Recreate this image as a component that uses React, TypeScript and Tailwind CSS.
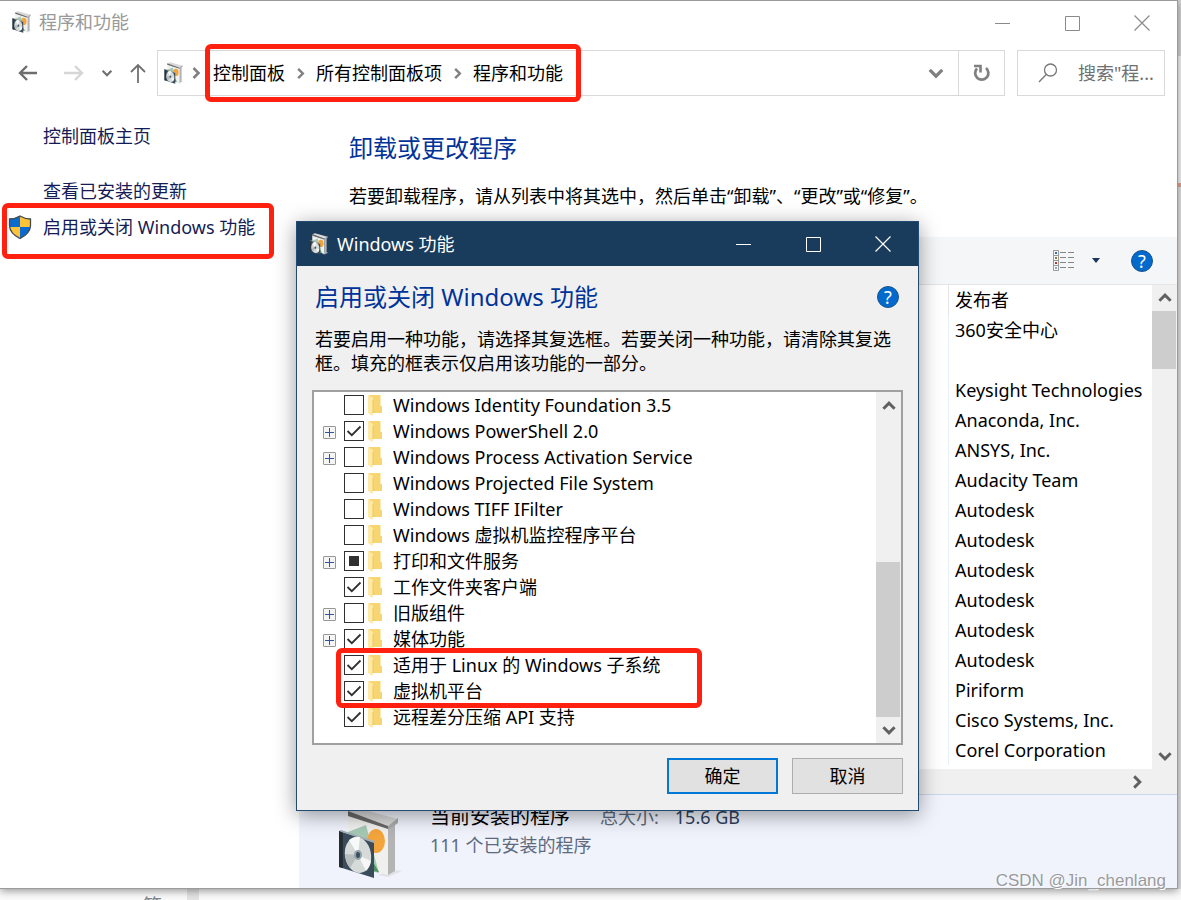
import React, { useState } from 'react';

type CheckState = 'off' | 'on' | 'partial';

interface Feature {
  name: string;
  state: CheckState;
  expandable?: boolean;
}

const initialFeatures: Feature[] = [
  { name: 'Windows Identity Foundation 3.5', state: 'off' },
  { name: 'Windows PowerShell 2.0', state: 'on', expandable: true },
  { name: 'Windows Process Activation Service', state: 'off', expandable: true },
  { name: 'Windows Projected File System', state: 'off' },
  { name: 'Windows TIFF IFilter', state: 'off' },
  { name: 'Windows 虚拟机监控程序平台', state: 'off' },
  { name: '打印和文件服务', state: 'partial', expandable: true },
  { name: '工作文件夹客户端', state: 'on' },
  { name: '旧版组件', state: 'off', expandable: true },
  { name: '媒体功能', state: 'on', expandable: true },
  { name: '适用于 Linux 的 Windows 子系统', state: 'on' },
  { name: '虚拟机平台', state: 'on' },
  { name: '远程差分压缩 API 支持', state: 'on' },
];

const publishers = [
  '360安全中心',
  '',
  'Keysight Technologies',
  'Anaconda, Inc.',
  'ANSYS, Inc.',
  'Audacity Team',
  'Autodesk',
  'Autodesk',
  'Autodesk',
  'Autodesk',
  'Autodesk',
  'Autodesk',
  'Piriform',
  'Cisco Systems, Inc.',
  'Corel Corporation',
];

const breadcrumbs = ['控制面板', '所有控制面板项', '程序和功能'];

// Software box with a CD case in front of it
const ProgramsIcon: React.FC<{ className: string }> = ({ className }) => (
  <svg className={className} viewBox="0 0 64 72" aria-hidden="true">
    <path d="M40 68 L54 63 L64 64 L50 70Z" fill="#d9dbe0" opacity="0.7" />
    <path d="M10 6 L50 20 V68 L10 56Z" fill="#f0f0ee" />
    <path d="M50 20 L57 17 V64 L50 68Z" fill="#b4b4b4" />
    <path d="M10 25 L28 18 L41 66 L10 58Z" fill="#a5c9b4" />
    <path d="M32 50 L41 65 L35 64Z" fill="#4e9464" />
    <ellipse cx="38" cy="34" rx="9" ry="12" fill="#f3a43c" />
    <path d="M10 4 L19 1 L60 12 L50 19Z" fill="#d8d8d8" />
    <path d="M10 4 L50 19 V22 L10 9Z" fill="#686868" />
    <path d="M50 19 L60 11 V16 L50 23Z" fill="#a9a9a9" />
    <path d="M1 24 L36 35 V71 L1 60Z" fill="#3a4b5a" />
    <path d="M1 24 L3 23 L37 34 L36 36Z" fill="#a4adb5" />
    <path d="M1 24 L5 26 V61 L1 60Z" fill="#242c34" />
    <ellipse cx="20" cy="48" rx="13" ry="18" fill="#d6dad9" transform="rotate(-10 20 48)" />
    <path d="M20 48 L11 33 Q16 29 22 30Z" fill="#f8faf9" />
    <path d="M20 48 L28 64 Q32 60 33 54Z" fill="#f6f6f6" />
    <path d="M20 48 L7 47 Q8 56 12 61Z" fill="#b6bdbd" />
    <ellipse cx="20" cy="48" rx="4" ry="5" fill="#93a1ab" />
    <ellipse cx="20" cy="48" rx="2" ry="3" fill="#3d4f5e" />
  </svg>
);

const ShieldIcon: React.FC = () => (
  <svg className="h-6 w-6 shrink-0" viewBox="0 0 24 24" aria-hidden="true">
    <path d="M12 1 Q7 4 1.5 4 V11 Q2 18.500 12 23.500Z" fill="#0a6ad0" />
    <path d="M12 1 Q17 4 22.500 4 V11 Q22 18.500 12 23.500Z" fill="#ffc338" />
    <path d="M1.500 12 H12 V23.500 Q2.500 19 1.500 12Z" fill="#ffc338" />
    <path d="M22.500 12 H12 V23.500 Q21.500 19 22.500 12Z" fill="#0a6ad0" />
    <path d="M12 1 Q17 4 22.500 4 V11 Q22 18.500 12 23.500 Q2 18.500 1.500 11 V4 Q7 4 12 1Z" fill="none" stroke="#444b50" strokeWidth="1.300" />
  </svg>
);

const FolderIcon: React.FC = () => (
  <svg className="ml-1 h-[21px] w-[14px] shrink-0" viewBox="0 0 14 21" aria-hidden="true">
    <path d="M1 0 H12.500 V11 H14 V18 H1Z" fill="#f7d672" />
    <path d="M0 0 L5 3 V19 L4 21 L0 18Z" fill="#ffe9a6" />
    <path d="M5 5 V18" stroke="#ecc660" strokeWidth="1" />
  </svg>
);

const Chevron: React.FC<{ dir: 'up' | 'down' | 'right'; color?: string; className?: string }> = ({ dir, color = '#606060', className = 'h-4 w-4' }) => {
  const paths = { up: 'M3 10.500 L8 5.500 L13 10.500', down: 'M3 5.500 L8 10.500 L13 5.500', right: 'M5.500 3 L10.500 8 L5.500 13' };
  return (
    <svg className={className} viewBox="0 0 16 16" fill="none" stroke={color} strokeWidth="2.600" aria-hidden="true">
      <path d={paths[dir]} />
    </svg>
  );
};

const HelpButton: React.FC = () => (
  <button aria-label="帮助" className="flex h-[22px] w-[22px] shrink-0 items-center justify-center rounded-full border border-[#17548c] bg-[#0369cc] text-lg leading-none text-white">
    ?
  </button>
);

const WindowButtons: React.FC<{ color: string }> = ({ color }) => (
  <div className="flex" style={{ color }}>
    <button aria-label="最小化" className="flex h-11 w-[70px] items-center justify-center">
      <svg width="15" height="15" viewBox="0 0 15 15" stroke="currentColor"><path d="M0 7.500H15" /></svg>
    </button>
    <button aria-label="最大化" className="flex h-11 w-[70px] items-center justify-center">
      <svg width="15" height="15" viewBox="0 0 15 15" stroke="currentColor" fill="none"><path d="M.5 .5H14.500V14.500H.5Z" /></svg>
    </button>
    <button aria-label="关闭" className="flex h-11 w-[70px] items-center justify-center">
      <svg width="16" height="16" viewBox="0 0 16 16" stroke="currentColor" strokeWidth="1.200"><path d="M.5 .5L15.500 15.500M15.500 .5L.5 15.500" /></svg>
    </button>
  </div>
);

const AddressRow: React.FC = () => (
  <div className="flex h-[46px] items-stretch pr-3">
    <div className="flex w-[157px] shrink-0 items-center pl-[18px]">
      <button aria-label="后退">
        <svg width="20" height="18" viewBox="0 0 20 18" fill="none" stroke="#6e6e6e" strokeWidth="2.400"><path d="M19 9H2M9 2L2 9L9 16" /></svg>
      </button>
      <button aria-label="前进" className="ml-[26px]">
        <svg width="20" height="18" viewBox="0 0 20 18" fill="none" stroke="#d6d6d6" strokeWidth="2.400"><path d="M0 9H18M11 2L18 9L11 16" /></svg>
      </button>
      <button aria-label="最近的位置" className="ml-4">
        <Chevron dir="down" color="#707070" className="h-[14px] w-[14px]" />
      </button>
      <button aria-label="上移" className="ml-4">
        <svg width="16" height="20" viewBox="0 0 16 20" fill="none" stroke="#707070" strokeWidth="1.800"><path d="M8 20V2M1 9L8 2L15 9" /></svg>
      </button>
    </div>
    <div className="flex min-w-0 flex-1 items-center border border-[#d9d9d9] pl-1.5">
      <ProgramsIcon className="h-[22px] w-[20px] shrink-0" />
      <Chevron dir="right" color="#808080" className="ml-1 mr-px h-4 w-4 shrink-0" />
      <nav className="relative flex items-center px-2 text-black">
        {breadcrumbs.map((crumb, i) => (
          <React.Fragment key={crumb}>
            {i > 0 && <Chevron dir="right" color="#808080" className="mx-2 h-[15px] w-[15px] shrink-0" />}
            <button className="whitespace-nowrap">{crumb}</button>
          </React.Fragment>
        ))}
        <span className="pointer-events-none absolute -inset-y-[15px] -right-[10px] left-0 rounded-md border-[5px] border-[#ff2010]" />
      </nav>
      <button aria-label="以前的位置" className="ml-auto mr-3"><Chevron dir="down" color="#808080" className="h-5 w-5" /></button>
      <button aria-label="刷新" className="flex w-[46px] items-center justify-center self-stretch border-l border-[#d9d9d9]">
        <svg width="20" height="20" viewBox="0 0 20 20" fill="none" aria-hidden="true">
          <path d="M5 5.500A6.600 6.600 0 1 0 14 5" stroke="#808080" strokeWidth="2.800" />
          <path d="M2 3H8.500V9.500" stroke="#808080" strokeWidth="2.600" />
        </svg>
      </button>
    </div>
    <label className="ml-3 flex w-[148px] shrink-0 items-center border border-[#d9d9d9]">
      <svg className="ml-5 shrink-0" width="20" height="20" viewBox="0 0 20 20" fill="none" stroke="#777" strokeWidth="1.300" aria-hidden="true">
        <circle cx="12.500" cy="7" r="6" />
        <path d="M8.200 11.500L1 19" />
      </svg>
      <input aria-label="搜索" placeholder={'搜索"程...'} className="ml-5 w-full min-w-0 outline-none placeholder:text-[#707070]" />
    </label>
  </div>
);

const Sidebar: React.FC = () => (
  <aside className="flex w-[299px] shrink-0 flex-col pl-[43px] pt-[26px] text-[#151c55]">
    <a href="#home" className="leading-7">控制面板主页</a>
    <a href="#updates" className="mt-[27px] leading-7">查看已安装的更新</a>
    <div className="relative mt-2 -ml-[35px] mr-[25px] flex items-center gap-[11px]">
      <ShieldIcon />
      <a href="#features" className="whitespace-nowrap leading-7">启用或关闭 Windows 功能</a>
      <span className="pointer-events-none absolute -bottom-[18px] -left-[6px] -top-[10px] right-0 rounded-md border-[5px] border-[#ff2010]" />
    </div>
  </aside>
);

const ProgramList: React.FC = () => (
  <>
    <div className="flex h-12 items-center justify-end border-b border-[#e5e5e5] bg-[#f4f6f8] pr-6">
      <button aria-label="更改视图" className="flex items-center">
        <svg width="22" height="21" viewBox="0 0 22 21" fill="none" aria-hidden="true">
          <path d="M.5 .5H5.500V20.500H.5ZM.5 5.500H5.500M.5 10.500H5.500M.5 15.500H5.500" stroke="#9a9a9a" />
          <path d="M7 2.500H13M15 2.500H21M7 7.500H13M15 7.500H21M7 12.500H13M15 12.500H21M7 17.500H13M15 17.500H21" stroke="#858585" />
          <path d="M2 2H4V4H2Z" fill="#386da0" />
          <path d="M2 7H4V9H2Z" fill="#8f7d3a" />
          <path d="M2 12H4V14H2Z" fill="#b5352a" />
          <path d="M2 17H4V19H2Z" fill="#93a9bd" />
        </svg>
        <svg className="ml-[17px]" width="8" height="5" viewBox="0 0 8 5" aria-hidden="true"><path d="M0 0H8L4 5Z" fill="#1c355e" /></svg>
      </button>
      <div className="ml-[31px] flex"><HelpButton /></div>
    </div>
    <div className="flex h-[484px]">
      <div className="flex flex-1 justify-end overflow-hidden">
        <table className="w-[204px] table-fixed border-collapse self-start text-left text-black">
          <thead>
            <tr className="h-[30px]"><th className="border-l border-[#e5e5e5] p-0 pl-1.5 font-normal leading-7">发布者</th></tr>
          </thead>
          <tbody>
            {publishers.map((name, i) => (
              <tr key={i} className="h-[30px]"><td className="whitespace-nowrap border-l border-[#e6effa] p-0 pl-1.5 leading-7">{name}</td></tr>
            ))}
          </tbody>
        </table>
      </div>
      <div className="flex w-[25px] flex-col items-center bg-[#f0f0f0]">
        <button aria-label="向上滚动" className="flex h-[26px] items-center"><Chevron dir="up" className="h-[18px] w-[18px]" /></button>
        <div className="h-[58px] w-full border-r border-[#f0f0f0] bg-[#cdcdcd]" />
        <button aria-label="向下滚动" className="mt-auto flex h-[26px] items-center"><Chevron dir="down" className="h-[18px] w-[18px]" /></button>
      </div>
    </div>
    <div className="flex h-[25px] items-center justify-end bg-[#f0f0f0] pr-[31px]">
      <button aria-label="向右滚动"><Chevron dir="right" className="h-[18px] w-[18px]" /></button>
    </div>
  </>
);

const DetailsPane: React.FC = () => (
  <div className="flex flex-1 border-t border-[#cbd8ec] bg-[#f0f3fc] pl-[39px]">
    <ProgramsIcon className="mt-3 h-[72px] w-[64px] shrink-0" />
    <div className="ml-7 mt-2">
      <div className="flex items-center leading-7">
        <span className="text-xl leading-7 text-black">当前安装的程序</span>
        <span className="ml-[30px] text-[#5e6b7e]">总大小:</span>
        <span className="ml-4 text-[#2c405c]">15.6 GB</span>
      </div>
      <div className="leading-7 text-[#5e6b7e]">111 个已安装的程序</div>
    </div>
  </div>
);

const FeatureRow: React.FC<{ feature: Feature; onToggle: () => void }> = ({ feature, onToggle }) => (
  <li className="flex h-[26px] items-center">
    <div className="flex w-[30px] shrink-0 pl-[9px]">
      {feature.expandable && (
        <button aria-label={`展开 ${feature.name}`} className="mt-0.5 rounded-[1px] border border-[#979797] bg-[#f5f5f5]">
          <svg width="11" height="11" viewBox="0 0 11 11" stroke="#34549a"><path d="M1 5.500H10M5.500 1V10" /></svg>
        </button>
      )}
    </div>
    <label className="flex items-center">
      <span className="relative flex h-5 w-5 shrink-0">
        <input type="checkbox" checked={feature.state === 'on'} onChange={onToggle} className="h-5 w-5 appearance-none border border-[#303030] bg-white" />
        {feature.state === 'on' && (
          <svg className="pointer-events-none absolute inset-0" width="20" height="20" viewBox="0 0 20 20" fill="none" stroke="#303030" strokeWidth="1.800"><path d="M3.500 10L7.800 14.200L16.500 5.500" /></svg>
        )}
        {feature.state === 'partial' && <span className="pointer-events-none absolute inset-[5px] bg-[#303030]" />}
      </span>
      <FolderIcon />
      <span className="ml-[11px] whitespace-nowrap">{feature.name}</span>
    </label>
  </li>
);

const FeaturesDialog: React.FC = () => {
  const [features, setFeatures] = useState(initialFeatures);

  const toggle = (index: number) => {
    setFeatures((prev) => prev.map((f, i) => (i === index ? { ...f, state: f.state === 'on' ? 'off' : 'on' } : f)));
  };

  return (
    <div role="dialog" aria-label="Windows 功能" className="absolute left-[296px] top-[221px] z-20 w-[623px] border border-[#234a73] bg-[#f0f0f0] text-black shadow-[0_4px_20px_rgba(0,0,0,0.4)]">
      <div className="flex h-11 items-center bg-[#193b5c] pl-3 text-white">
        <ProgramsIcon className="h-[22px] w-[20px]" />
        <span className="ml-2 mr-auto">Windows 功能</span>
        <WindowButtons color="#ffffff" />
      </div>
      <div className="px-[15px] pb-4 pt-[13px]">
        <div className="flex items-center justify-between pl-[3px] pr-1">
          <h2 className="text-2xl leading-9 text-[#003399]">启用或关闭 Windows 功能</h2>
          <HelpButton />
        </div>
        <p className="mt-3 pl-[3px] leading-6">若要启用一种功能，请选择其复选框。若要关闭一种功能，请清除其复选框。填充的框表示仅启用该功能的一部分。</p>
        <div className="relative mt-[15px] flex h-[355px] border-2 border-[#a0a0a0] bg-white">
          <ul className="flex-1">
            {features.map((feature, i) => (
              <FeatureRow key={feature.name} feature={feature} onToggle={() => toggle(i)} />
            ))}
          </ul>
          <div className="flex w-[25px] flex-col items-center bg-[#f0f0f0]">
            <button aria-label="向上滚动" className="flex h-7 items-center"><Chevron dir="up" className="h-[18px] w-[18px]" /></button>
            <div className="mt-auto h-[155px] w-full border-r border-[#f0f0f0] bg-[#cdcdcd]" />
            <button aria-label="向下滚动" className="flex h-[26px] items-center"><Chevron dir="down" className="h-[18px] w-[18px]" /></button>
          </div>
          <span className="pointer-events-none absolute left-[22px] top-[256px] h-[60px] w-[366px] rounded-md border-[5px] border-[#ff2010]" />
        </div>
        <div className="mt-[13px] flex justify-end gap-3.5">
          <button className="h-9 w-[111px] border-2 border-[#0078d7] bg-[#e1e1e1]">确定</button>
          <button className="h-9 w-[111px] border border-[#adadad] bg-[#e1e1e1]">取消</button>
        </div>
      </div>
    </div>
  );
};

const App: React.FC = () => {
  return (
    <div className="relative flex h-screen flex-col overflow-hidden bg-[#fafafa] font-['Noto_Sans','Noto_Sans_CJK_SC',sans-serif] text-lg">
      <div className="flex min-h-0 flex-1">
        <main className="z-10 flex min-w-0 flex-1 flex-col border border-l-0 border-[#9b9b9b] bg-white shadow-[0_2px_8px_rgba(0,0,0,0.4)]">
          <header className="flex h-[49px] items-start pl-3">
            <div className="flex h-[42px] items-center">
              <ProgramsIcon className="h-[22px] w-[20px]" />
              <h1 className="ml-[7px] text-[#999999]">程序和功能</h1>
            </div>
            <div className="ml-auto"><WindowButtons color="#8a8a8a" /></div>
          </header>
          <AddressRow />
          <div className="flex min-h-0 flex-1">
            <Sidebar />
            <section className="flex min-w-0 flex-1 flex-col">
              <div className="h-[141px] pl-[50px] pt-[34px]">
                <h2 className="text-2xl leading-9 text-[#003399]">卸载或更改程序</h2>
                <p className="mt-4 leading-7 text-black">若要卸载程序，请从列表中将其选中，然后单击“卸载”、“更改”或“修复”。</p>
              </div>
              <ProgramList />
              <DetailsPane />
            </section>
          </div>
        </main>
        <div className="flex w-[3px] shrink-0 flex-col overflow-hidden bg-[#e4e4e4] text-black">
          <div className="h-14 bg-[#d5d5d5]" />
          <div className="h-[127px] bg-[#f6f6f6]" />
          <div className="h-1 bg-[#e9a08d]" />
        </div>
      </div>
      <div className="flex h-[11px] shrink-0">
        <div className="h-full w-[187px] overflow-hidden pl-[142px] pt-1.5 text-xl leading-6 text-[#7d8590]">第</div>
        <div className="h-full w-3 bg-[#e4e4e4]" />
      </div>
      <FeaturesDialog />
      <div className="absolute bottom-[7px] right-[15px] z-10 font-['Liberation_Sans',sans-serif] text-[17px] leading-6 text-[#9a9a9c] [text-shadow:1px_1px_0_#ffffff]">CSDN @Jin_chenlang</div>
    </div>
  );
};

export default App;
